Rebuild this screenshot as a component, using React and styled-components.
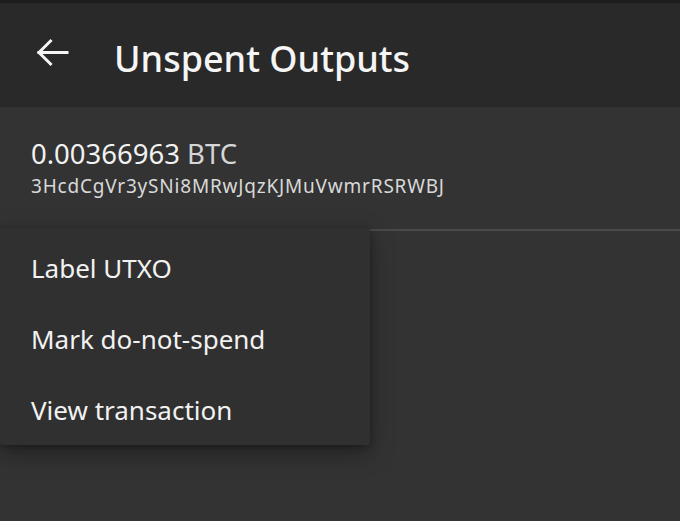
import React from 'react'
import styled, { createGlobalStyle } from 'styled-components'

const Global = createGlobalStyle`
  html, body { margin: 0; padding: 0; background: #333333; }
  body { font-family: "Noto Sans", "DejaVu Sans", sans-serif; color: #f2f2f2; }
`

const Screen = styled.div`
  width: 680px;
  height: 521px;
  overflow: hidden;
  background: #333333;
  border-top: 3px solid #1c1c1c;
  box-sizing: border-box;
  display: flex;
  flex-direction: column;
`

const AppBar = styled.header`
  height: 104px;
  flex: none;
  background: #292929;
  display: flex;
  align-items: center;
  padding-left: 36px;
  gap: 44px;
`

const BackButton = styled.button`
  border: 0;
  background: none;
  padding: 0;
  width: 34px;
  height: 30px;
  color: #f5f5f5;
  display: flex;
  align-items: center;
  margin-top: -4px;
`

const Title = styled.h1`
  margin: 6px 0 0;
  font-size: 36px;
  font-weight: 500;
  color: #f5f5f5;
`

const Body = styled.main`
  position: relative;
  flex: 1;
`

const Utxo = styled.div`
  padding: 31px 31px 0;
  height: 124px;
  box-sizing: border-box;
  border-bottom: 2px solid #4a4a4a;
`

const Amount = styled.div`
  font-size: 27.5px;
  line-height: 32px;
  color: #f2f2f2;
`

const Unit = styled.span`
  color: #d6d6d6;
`

const Address = styled.div`
  margin-top: 3px;
  font-size: 19px;
  line-height: 26px;
  letter-spacing: 0.8px;
  color: #d9d9d9;
`

const Menu = styled.ul`
  position: absolute;
  left: 0;
  top: 121px;
  width: 370px;
  margin: 0;
  padding: 4px 0 0;
  list-style: none;
  background: #303030;
  border-radius: 3px;
  box-shadow: 0 8px 24px rgba(0, 0, 0, 0.35), 0 2px 6px rgba(0, 0, 0, 0.25);
`

const MenuItem = styled.li`
  height: 71px;
  display: flex;
  align-items: center;
  padding-left: 31px;
  font-size: 26px;
  color: #f2f2f2;
`

const BackArrow = () => (
  <svg width="34" height="30" viewBox="0 0 34 30" fill="none" stroke="currentColor" strokeWidth="3" strokeLinecap="square">
    <path d="M3 14.5h28" />
    <path d="M14.5 3 3 14.5 14.5 26" />
  </svg>
)

const actions = ['Label UTXO', 'Mark do-not-spend', 'View transaction']

export default function App() {
  return (
    <Screen>
      <Global />
      <AppBar>
        <BackButton aria-label="Back">
          <BackArrow />
        </BackButton>
        <Title>Unspent Outputs</Title>
      </AppBar>
      <Body>
        <Utxo>
          <Amount>
            0.00366963 <Unit>BTC</Unit>
          </Amount>
          <Address>3HcdCgVr3ySNi8MRwJqzKJMuVwmrRSRWBJ</Address>
        </Utxo>
        <Menu>
          {actions.map(a => (
            <MenuItem key={a}>{a}</MenuItem>
          ))}
        </Menu>
      </Body>
    </Screen>
  )
}
